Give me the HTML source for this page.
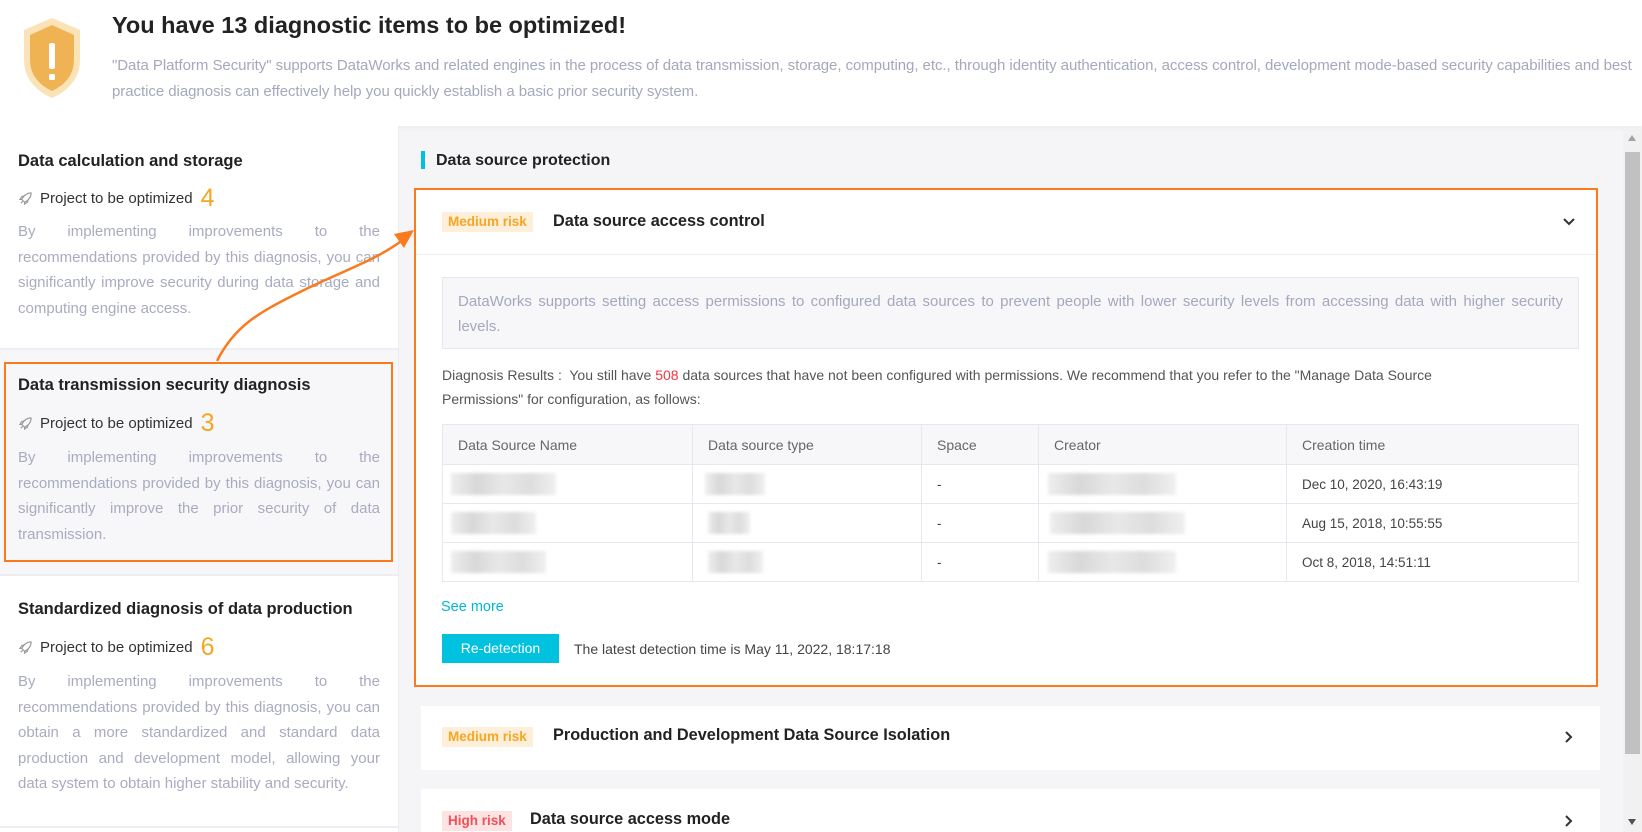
<!DOCTYPE html>
<html><head><meta charset="utf-8"><style>
*{box-sizing:border-box;margin:0;padding:0}
body{width:1642px;height:832px;overflow:hidden;background:#f5f5f8;font-family:"Liberation Sans",sans-serif;position:relative;color:#333}
.abs{position:absolute}
.hdr{left:0;top:0;width:1642px;height:126px;background:#fff;box-shadow:0 2px 6px rgba(0,0,0,.04)}
.title{left:112px;top:12px;font-size:23.5px;font-weight:bold;color:#222;letter-spacing:0}
.desc{left:112px;top:53px;font-size:15px;line-height:26px;color:#a5a8bd;white-space:nowrap;letter-spacing:-.05px}
.left{left:0;top:126px;width:399px;height:706px;background:#fff;border-right:1px solid #eceef3}
.proj{position:absolute;left:18px;font-size:15px;color:#333;display:flex;align-items:center}
.proj b{color:#f5a623;font-size:25px;font-weight:normal;margin-left:8px;line-height:20px}
.proj svg{margin-right:7px}
.cd{position:absolute;left:18px;width:362px;font-size:15px;line-height:25.6px;color:#a9abc0;text-align:justify}
.sep{position:absolute;left:0;width:399px;height:2px;background:#eceef3}
.tag{display:inline-block;font-size:13.5px;padding:0 6px;height:20px;line-height:20px;font-weight:bold}
.med{background:#fdefd9;color:#f5a623}
.high{background:#fde3e3;color:#f0505a}
table{border-collapse:collapse;font-size:13.5px;color:#555}
td,th{border:1px solid #e6e8f0;text-align:left;font-weight:normal;padding:0 15px}
th{background:#f7f7fa;color:#666;height:40px;font-size:14px}
td{height:39px;color:#444}
.blur{display:inline-block;height:22px;background:linear-gradient(90deg,#eee,#d8d8d8,#e8e8e8,#ddd,#f0f0f0);filter:blur(1.5px);vertical-align:middle}
h3{position:absolute;left:18px;font-size:16.5px;font-weight:bold;color:#222}
.ct{font-size:16.3px;font-weight:bold;color:#222}
</style></head><body>
<div class="abs hdr"></div>
<svg class="abs" style="left:22px;top:16px" width="60" height="84" viewBox="0 0 60 84">
<path d="M30 2 L58 14 V44 C58 64 44 76 30 82 C16 76 2 64 2 44 V14 Z" fill="#fbe3b8"/>
<path d="M30 9 L52 19 V44 C52 60 41 70 30 75 C19 70 8 60 8 44 V19 Z" fill="#efb354"/>
<rect x="27" y="27" width="6" height="26" rx="2" fill="#fff"/><rect x="27" y="58" width="6" height="6" rx="1.5" fill="#fff"/>
</svg>
<div class="abs title">You have 13 diagnostic items to be optimized!</div>
<div class="abs desc">"Data Platform Security" supports DataWorks and related engines in the process of data transmission, storage, computing, etc., through identity authentication, access control, development mode-based security capabilities and best<br>practice diagnosis can effectively help you quickly establish a basic prior security system.</div>

<div class="abs left">
<h3 style="top:26px">Data calculation and storage</h3>
<div class="proj" style="top:62px"><svg width="15" height="15" viewBox="0 0 16 16" fill="none" stroke="#999" stroke-width="1.2"><path d="M14 2 C9 2 6 5 4 9 L7 12 C11 10 14 7 14 2Z M4 9 L2 9 L4 6 L7 5 M7 12 L7 14 L10 12 L11 9 M3 13 L5 11"/></svg>Project to be optimized<b>4</b></div>
<div class="cd" style="top:93px">By implementing improvements to the recommendations provided by this diagnosis, you can significantly improve security during data storage and computing engine access.</div>
<div class="sep" style="top:222px"></div>
<div class="abs" style="left:0;top:224px;width:398px;height:224px;background:#f7f7fa"></div>
<h3 style="top:250px">Data transmission security diagnosis</h3>
<div class="proj" style="top:287px"><svg width="15" height="15" viewBox="0 0 16 16" fill="none" stroke="#999" stroke-width="1.2"><path d="M14 2 C9 2 6 5 4 9 L7 12 C11 10 14 7 14 2Z M4 9 L2 9 L4 6 L7 5 M7 12 L7 14 L10 12 L11 9 M3 13 L5 11"/></svg>Project to be optimized<b>3</b></div>
<div class="cd" style="top:319px">By implementing improvements to the recommendations provided by this diagnosis, you can significantly improve the prior security of data transmission.</div>
<div class="sep" style="top:448px"></div>
<h3 style="top:474px">Standardized diagnosis of data production</h3>
<div class="proj" style="top:511px"><svg width="15" height="15" viewBox="0 0 16 16" fill="none" stroke="#999" stroke-width="1.2"><path d="M14 2 C9 2 6 5 4 9 L7 12 C11 10 14 7 14 2Z M4 9 L2 9 L4 6 L7 5 M7 12 L7 14 L10 12 L11 9 M3 13 L5 11"/></svg>Project to be optimized<b>6</b></div>
<div class="cd" style="top:543px">By implementing improvements to the recommendations provided by this diagnosis, you can obtain a more standardized and standard data production and development model, allowing your data system to obtain higher stability and security.</div>
<div class="sep" style="top:700px"></div>
</div>
<div class="abs" style="left:4px;top:362px;width:389px;height:200px;border:2.5px solid #fb7a1d"></div>

<div class="abs" style="left:421px;top:151px;width:4px;height:18px;background:#00c1de"></div>
<div class="abs" style="left:436px;top:152px;font-size:16px;font-weight:bold;color:#222">Data source protection</div>

<div class="abs" style="left:414px;top:188px;width:1184px;height:499px;background:#fff;border:2.5px solid #fb7a1d"></div>
<div class="abs" style="left:416px;top:254px;width:1180px;height:1px;background:#eceef3"></div>
<div class="abs" style="left:442px;top:212px"><span class="tag med">Medium risk</span></div>
<div class="abs ct" style="left:553px;top:212px">Data source access control</div>
<svg class="abs" style="left:1562px;top:217px" width="14" height="10" viewBox="0 0 14 10"><path d="M2 2 L7 7 L12 2" fill="none" stroke="#333" stroke-width="2"/></svg>
<div class="abs" style="left:442px;top:277px;width:1137px;height:72px;background:#f7f7fa;border:1px solid #e6e8ee;padding:11px 15px 0 15px;font-size:15px;line-height:25px;color:#a5a8bd;text-align:justify">DataWorks supports setting access permissions to configured data sources to prevent people with lower security levels from accessing data with higher security levels.</div>
<div class="abs" style="left:442px;top:363px;width:1130px;font-size:14px;line-height:24px;color:#555">Diagnosis Results :&nbsp; You still have <span style="color:#f0343f">508</span> data sources that have not been configured with permissions. We recommend that you refer to the "Manage Data Source<br>Permissions" for configuration, as follows:</div>
<table class="abs" style="left:442px;top:424px;width:1137px">
<tr><th style="width:250px">Data Source Name</th><th style="width:229px">Data source type</th><th style="width:117px">Space</th><th style="width:248px">Creator</th><th>Creation time</th></tr>
<tr><td><span class="blur" style="width:105px;margin-left:-7px"></span></td><td><span class="blur" style="width:60px;margin-left:-3px"></span></td><td>-</td><td><span class="blur" style="width:128px;margin-left:-6px"></span></td><td>Dec 10, 2020, 16:43:19</td></tr>
<tr><td><span class="blur" style="width:85px;margin-left:-7px"></span></td><td><span class="blur" style="width:42px"></span></td><td>-</td><td><span class="blur" style="width:135px;margin-left:-4px"></span></td><td>Aug 15, 2018, 10:55:55</td></tr>
<tr><td><span class="blur" style="width:95px;margin-left:-7px"></span></td><td><span class="blur" style="width:55px"></span></td><td>-</td><td><span class="blur" style="width:128px;margin-left:-6px"></span></td><td>Oct 8, 2018, 14:51:11</td></tr>
</table>
<div class="abs" style="left:441px;top:599px;font-size:14.5px;color:#00b7d4">See more</div>
<div class="abs" style="left:442px;top:634px;width:117px;height:29px;background:#00c1de;color:#fff;font-size:14px;line-height:29px;text-align:center">Re-detection</div>
<div class="abs" style="left:574px;top:641px;font-size:14px;color:#444">The latest detection time is May 11, 2022, 18:17:18</div>

<div class="abs" style="left:421px;top:706px;width:1179px;height:64px;background:#fff"></div>
<div class="abs" style="left:442px;top:727px"><span class="tag med">Medium risk</span></div>
<div class="abs ct" style="left:553px;top:726px">Production and Development Data Source Isolation</div>
<svg class="abs" style="left:1564px;top:730px" width="10" height="14" viewBox="0 0 10 14"><path d="M2 2 L7 7 L2 12" fill="none" stroke="#333" stroke-width="2"/></svg>
<div class="abs" style="left:421px;top:789px;width:1179px;height:43px;background:#fff"></div>
<div class="abs" style="left:442px;top:811px"><span class="tag high">High risk</span></div>
<div class="abs ct" style="left:530px;top:810px">Data source access mode</div>
<svg class="abs" style="left:1564px;top:814px" width="10" height="14" viewBox="0 0 10 14"><path d="M2 2 L7 7 L2 12" fill="none" stroke="#333" stroke-width="2"/></svg>

<div class="abs" style="left:1623px;top:128px;width:19px;height:704px;background:#f1f1f1"></div>
<div class="abs" style="left:1625px;top:152px;width:15px;height:602px;background:#c1c1c1"></div>
<svg class="abs" style="left:1627px;top:134px" width="10" height="8"><path d="M5 1 L9 7 H1Z" fill="#a3a3a3"/></svg>
<svg class="abs" style="left:1627px;top:818px" width="10" height="8"><path d="M1 1 H9 L5 7Z" fill="#505050"/></svg>

<svg class="abs" style="left:0;top:0" width="1642" height="832">
<path d="M217 361 C235 325 260 312 300 292 C340 272 372 262 400 242" fill="none" stroke="#fb7a1d" stroke-width="2.5"/>
<path d="M414 230 L394 234 L404 248 Z" fill="#fb7a1d"/>
</svg>
</body></html>
